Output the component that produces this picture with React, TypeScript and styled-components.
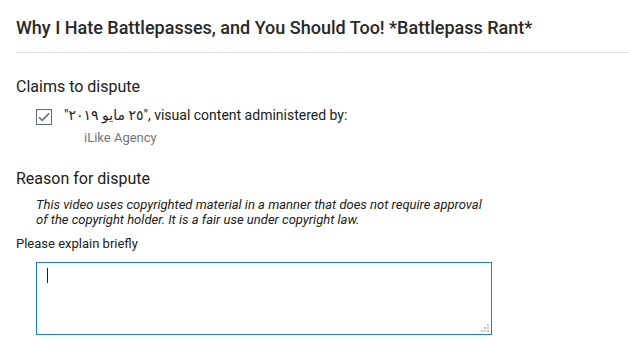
import React from "react";
import styled, { createGlobalStyle } from "styled-components";

const Global = createGlobalStyle`
  html, body { margin: 0; padding: 0; background: #fff; }
  body { font-family: Roboto, "Liberation Sans", "DejaVu Sans", sans-serif; color: #212121; }
`;

const Page = styled.div`
  padding: 0 0 0 16px;
  width: 613px;
`;

const Header = styled.div`
  height: 53px;
  border-bottom: 1px solid #e0e0e0;
  display: flex;
  align-items: center;
  padding-top: 3px;
  box-sizing: border-box;
`;

const Title = styled.h1`
  margin: 0;
  font-size: 18px;
  font-weight: 500;
  color: #282828;
`;

const SectionTitle = styled.h2<{ $top: number }>`
  margin: ${(p) => p.$top}px 0 0;
  font-size: 16px;
  font-weight: 400;
  line-height: 20px;
  color: #212121;
`;

const ClaimRow = styled.label`
  display: flex;
  align-items: flex-start;
  margin: 10px 0 0 20px;
  gap: 12px;
`;

const Box = styled.span`
  width: 16px;
  height: 16px;
  box-sizing: border-box;
  border: 1px solid #5a6b80;
  display: flex;
  align-items: center;
  justify-content: center;
  margin-top: 2px;
  flex: none;
`;

const ClaimText = styled.div`
  display: flex;
  flex-direction: column;
`;

const ClaimMain = styled.span`
  font-size: 14px;
  line-height: 17px;
  color: #212121;
`;

const Agency = styled.span`
  font-size: 13px;
  line-height: 17px;
  color: #757575;
  margin: 5px 0 0 20px;
`;

const Reason = styled.p`
  margin: 8px 0 0 20px;
  width: 458px;
  font-size: 13px;
  line-height: 15px;
  font-style: italic;
  color: #212121;
`;

const Label = styled.div`
  margin-top: 9px;
  font-size: 13px;
  line-height: 16px;
  color: #212121;
`;

const Area = styled.div`
  margin: 10px 0 0 20px;
  width: 456px;
  height: 73px;
  box-sizing: border-box;
  border: 1px solid #1a80d4;
  position: relative;
  padding: 5px 10px;
`;

const Caret = styled.span`
  display: block;
  width: 1px;
  height: 15px;
  background: #222;
`;

const Grip = styled.svg`
  position: absolute;
  right: 2px;
  bottom: 2px;
`;

export default function App() {
  return (
    <>
      <Global />
      <Page>
        <Header>
          <Title>Why I Hate Battlepasses, and You Should Too! *Battlepass Rant*</Title>
        </Header>
        <SectionTitle $top={24}>Claims to dispute</SectionTitle>
        <ClaimRow>
          <Box>
            <svg width="12" height="10" viewBox="0 0 12 10">
              <path d="M1 5.2 L4.3 8.4 L11 1.4" fill="none" stroke="#6f6f6f" strokeWidth="1.6" />
            </svg>
          </Box>
          <ClaimText>
            <ClaimMain>"٢٥ مايو ٢٠١٩", visual content administered by:</ClaimMain>
            <Agency>iLike Agency</Agency>
          </ClaimText>
        </ClaimRow>
        <SectionTitle $top={23}>Reason for dispute</SectionTitle>
        <Reason>
          This video uses copyrighted material in a manner that does not require approval of the copyright holder. It is a fair use under copyright law.
        </Reason>
        <Label>Please explain briefly</Label>
        <Area>
          <Caret />
          <Grip width="9" height="9" viewBox="0 0 9 9">
            <rect x="7" y="1" width="2" height="2" fill="#c8c8c8" />
            <rect x="4" y="4" width="2" height="2" fill="#c8c8c8" />
            <rect x="7" y="4" width="2" height="2" fill="#c8c8c8" />
            <rect x="1" y="7" width="2" height="2" fill="#c8c8c8" />
            <rect x="4" y="7" width="2" height="2" fill="#c8c8c8" />
            <rect x="7" y="7" width="2" height="2" fill="#c8c8c8" />
          </Grip>
        </Area>
      </Page>
    </>
  );
}
